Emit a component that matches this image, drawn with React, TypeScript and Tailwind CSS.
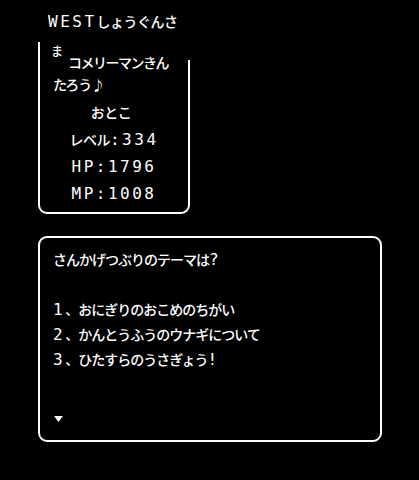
import React from "react";

const jp = { fontFamily: '"Noto Sans CJK JP", "Noto Sans", sans-serif' };
const mono = { fontFamily: '"DejaVu Sans Mono", "Liberation Mono", "Noto Sans CJK JP", monospace' };

function A({ children }: { children: React.ReactNode }) {
  // ascii glyphs drawn wider, like the pixel font
  return (
    <span style={mono} className="text-[16px] tracking-[2.5px]">
      {children}
    </span>
  );
}

function StatusWindow() {
  return (
    <div>
      <div className="pl-[48px] pt-[12px] text-[14px] leading-[18px] tracking-[-0.5px]">
        <A>WEST</A>しょうぐんさ
      </div>
      <div className="relative ml-[38px] mt-[11px] w-[152px] border-x-2 border-b-2 border-white rounded-b-[9px] pb-[5px]">
        {/* gap where the name runs over the frame */}
        <div className="absolute -right-[2px] top-0 w-[3px] h-[18px] bg-black" />
        <div className="flex items-start pl-[11px] pt-[2px]">
          <span className="text-[12px] leading-[14px]">ま</span>
          <span className="ml-[5px] mt-[10px] text-[14px] leading-[16px] tracking-[-1.5px]">
            コメリーマンきん
          </span>
        </div>
        <div className="pl-[13px] mt-[1px] text-[14px] leading-[26px] tracking-[-1px]">
          たろう♪
        </div>
        <div className="mt-[2px] flex flex-col items-center text-[14px] leading-[27px] tracking-[-0.5px]">
          <div className="pr-[6px]">おとこ</div>
          <div>
            レベル<A>:334</A>
          </div>
          <div>
            <A>HP:1796</A>
          </div>
          <div>
            <A>MP:1008</A>
          </div>
        </div>
      </div>
    </div>
  );
}

function MessageWindow() {
  return (
    <div className="ml-[38px] mt-[22px] w-[344px] h-[206px] border-2 border-white rounded-[9px] pl-[13px] pt-[9px]">
      <div className="text-[14px] leading-[25px] tracking-[-1px]">
        <div>
          さんかげつぶりのテーマは<A>?</A>
        </div>
        <div>&nbsp;</div>
        <div>
          <A>1</A>、おにぎりのおこめのちがい
        </div>
        <div>
          <A>2</A>、かんとうふうのウナギについて
        </div>
        <div>
          <A>3</A>、ひたすらのうさぎょう<A>!</A>
        </div>
      </div>
      <div className="mt-[44px] pl-[1px]">
        <svg width="9" height="6" viewBox="0 0 9 6">
          <polygon points="0,0 9,0 4.5,6" fill="white" />
        </svg>
      </div>
    </div>
  );
}

export default function App() {
  return (
    <div style={jp} className="w-[419px] h-[480px] bg-black text-white font-medium overflow-hidden">
      <StatusWindow />
      <MessageWindow />
    </div>
  );
}
